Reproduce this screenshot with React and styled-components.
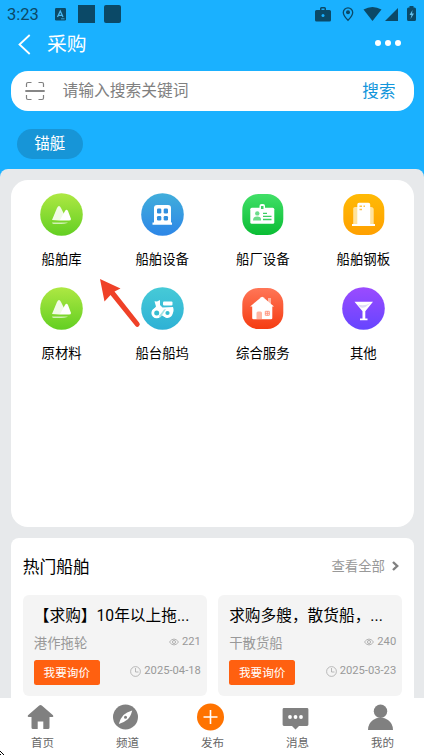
import React from 'react';
import styled, { createGlobalStyle } from 'styled-components';

const GlobalStyle = createGlobalStyle`
  * {
    box-sizing: border-box;
  }

  body {
    margin: 0;
    font-family: Roboto, 'Noto Sans CJK SC', sans-serif;
    overflow: hidden;
  }

  svg {
    display: block;
    flex-shrink: 0;
  }
`;

const Page = styled.div`
  position: relative;
  width: 424px;
  height: 755px;
  display: flex;
  flex-direction: column;
  overflow: hidden;
  background: #1ab1ff;
`;

const StatusBar = styled.div`
  height: 28px;
  padding: 2px 8px 0 7px;
  display: flex;
  align-items: center;
  color: #0b4967;
`;

const Time = styled.span`
  width: 48px;
  font-size: 16.5px;
  line-height: 26px;
`;

const StatusBlock = styled.span`
  width: 17px;
  height: 18px;
  margin: -2px 0 0 ${(props) => props.gap};
  border-radius: ${(props) => props.radius || 0};
  background: #0b4967;
`;

const StatusIcons = styled.svg`
  margin-left: auto;
`;

const NavBar = styled.div`
  height: 43px;
  padding: 0 23px 10px 18px;
  display: flex;
  align-items: center;
`;

const NavTitle = styled.h1`
  margin: 0 auto 0 16px;
  color: #fff;
  font-size: 19.8px;
  font-weight: 400;
  line-height: 32px;
`;

const Dots = styled.div`
  display: flex;
  gap: 4px;
  margin-top: -4px;

  span {
    width: 6px;
    height: 6px;
    border-radius: 50%;
    background: #fff;
  }
`;

const SearchBar = styled.div`
  height: 40px;
  margin: 0 10.5px 0 11.3px;
  padding: 0 18px 0 13.7px;
  display: flex;
  align-items: center;
  border-radius: 17px;
  background: #fff;
`;

const Placeholder = styled.span`
  margin: 0 auto 0 17.500px;
  color: #808080;
  font-size: 15.75px;
  line-height: 24px;
`;

const SearchAction = styled.span`
  margin-top: 2px;
  color: #1296db;
  font-size: 16.6px;
  line-height: 24px;
`;

const TagRow = styled.div`
  height: 58px;
  padding: 18px 17px 0;
`;

const Tag = styled.span`
  width: 65.5px;
  height: 30px;
  display: flex;
  justify-content: center;
  border-radius: 15px;
  background: #1795d7;
  color: #fff;
  font-size: 15.5px;
  line-height: 30px;
`;

const Content = styled.main`
  flex: 1;
  min-height: 0;
  padding: 11px 10.5px 0 11.3px;
  display: flex;
  flex-direction: column;
  gap: 11px;
  overflow: hidden;
  border-radius: 8px 8px 0 0;
  background: #e7e9eb;
`;

const CategoryCard = styled.section`
  height: 347px;
  flex-shrink: 0;
  display: grid;
  grid-template-columns: repeat(4, 100.6px);
  grid-auto-rows: 94px;
  padding-top: 13px;
  border-radius: 17px;
  background: #fff;
`;

const Category = styled.div`
  display: flex;
  flex-direction: column;
  align-items: center;
  gap: 14px;
  color: #000;
  font-size: 13.4px;
  line-height: 20px;
`;

const HotCard = styled.section`
  flex-shrink: 0;
  height: 180px;
  padding: 0 11.5px;
  border-radius: 8px;
  background: #fff;
`;

const HotHeader = styled.div`
  height: 57px;
  display: flex;
  justify-content: space-between;
  align-items: center;
`;

const HotTitle = styled.h2`
  margin: 0;
  color: #000;
  font-size: 16.75px;
  font-weight: 400;
  line-height: 24px;
`;

const More = styled.span`
  display: flex;
  align-items: center;
  gap: 7px;
  padding-right: 3px;
  color: #999;
  font-size: 13.4px;
  line-height: 24px;

  svg {
    margin-top: -2px;
  }
`;

const Ships = styled.div`
  display: grid;
  grid-template-columns: 184px 184px;
  gap: 11.4px;
`;

const Ship = styled.article`
  height: 101px;
  padding: 9px 6px 0 11px;
  border-radius: 6px;
  background: #f4f4f4;
`;

const ShipName = styled.div`
  width: 158px;
  overflow: hidden;
  white-space: nowrap;
  color: #000;
  font-size: 15.7px;
  line-height: 24px;
`;

const ShipRow = styled.div`
  display: flex;
  justify-content: space-between;
  margin-top: ${(props) => props.top};
`;

const ShipType = styled.span`
  color: #999;
  font-size: 13.4px;
  line-height: 20px;
`;

const Meta = styled.span`
  display: flex;
  align-items: center;
  gap: 3px;
  height: ${(props) => props.height};
  color: #999;
  font-size: ${(props) => props.size};
  line-height: 16px;
`;

const AskButton = styled.button`
  width: 66px;
  height: 25px;
  padding: 1px 0 0;
  border: 0;
  border-radius: 2.5px;
  background: #ff6010;
  color: #fff;
  font: 11.6px/24px Roboto, 'Noto Sans CJK SC', sans-serif;
`;

const TabBar = styled.nav`
  height: 57px;
  flex-shrink: 0;
  display: grid;
  grid-template-columns: repeat(5, 85px);
  padding-top: 5px;
  background: #fff;
`;

const Tab = styled.div`
  display: flex;
  flex-direction: column;
  align-items: center;
  gap: 3px;
  color: #666;
  font-size: 11.5px;
  line-height: 18px;

  svg {
    margin-left: -5px;
  }
`;

const Arrow = styled.svg`
  position: absolute;
  left: 98px;
  top: 277px;
`;

const Pointer = styled.svg`
  position: absolute;
  left: 0;
  bottom: 0;
`;

const Mountains = () => (
  <>
    <path d="M12 27 L17 15 Q19 11 21 15 L27 27Z" fill="#fff" opacity=".88" />
    <path d="M20 27 L25 18 Q26.5 15.5 28 18 L31 26 Q31 27.5 29 27.5 H12Z" fill="#fff" />
    <path d="M12 29.5 H28 Q25 31.5 13.5 31 Q12 30.5 12 29.5Z" fill="#fff" opacity=".65" />
  </>
);

const Building = () => (
  <>
    <path d="M13 29.5V15Q13 12 16 12H27Q30 12 30 15V29.5H31V31.7H11.5V29.5Z" fill="#fff" />
    <g fill="#318fdf">
      <rect x="16" y="15.5" width="4.3" height="5" rx="1.3" />
      <rect x="22.7" y="15.5" width="4.3" height="5" rx="1.3" />
      <rect x="16" y="23" width="4.3" height="4.6" rx="1.3" />
      <rect x="22.7" y="23" width="4.3" height="4.6" rx="1.3" />
    </g>
  </>
);

const Badge = () => (
  <>
    <rect x="9.3" y="14.7" width="24" height="16" rx="1.5" fill="#fff" />
    <rect x="18.5" y="11" width="5.5" height="6" rx="2" fill="#fff" />
    <rect x="20" y="13" width="2.5" height="3" fill="#3fcf65" />
    <circle cx="16.3" cy="20.4" r="2.2" fill="#6bdc89" />
    <path d="M12 27.5Q12 23.5 16.2 23.5T20 27.5Z" fill="#6bdc89" />
    <path d="M22 20.3H26M22 23.3H30.5M22 26.5H30.5" stroke="#3bcf63" strokeWidth="1.3" />
  </>
);

const Tower = () => (
  <>
    <path d="M11.2 31V15.5Q11.2 14 13 14H16V31M27 14H29Q31.7 14 31.7 16.5V31H27Z" fill="#ffe39d" />
    <path d="M15.3 31V11.5Q15.3 9.7 17 9.7H26.5Q28.2 9.7 28.2 11.5V31H33V33H10V31Z" fill="#fff" />
    <path d="M17.5 13.3H20M17.5 16.5H20M21.5 13.3H23" stroke="#ffc347" strokeWidth="1.5" />
  </>
);

const Tractor = () => (
  <>
    <path d="M13.5 14.3L16 14.5L19 13V18L21.5 20.5L32 20Q33.5 24 31 27.5L26 31L18 27L11 24L15 19.5Z" fill="#fff" />
    <rect x="22" y="14.5" width="9.5" height="4" rx="1" fill="#fff" />
    <circle cx="15.7" cy="26" r="3.9" fill="#36bdd0" stroke="#fff" strokeWidth="2.8" />
    <circle cx="26.5" cy="26" r="3.6" fill="#36bdd0" stroke="#fff" strokeWidth="3" />
    <path d="M18 29L23 22.5L25 22L19.5 30.5Z" fill="#a3e3e5" />
  </>
);

const House = () => (
  <>
    <path d="M27 11H30V20H27Z" fill="#ffb6a4" />
    <path d="M20.2 10.2Q21.2 9.4 22.2 10.2L33 19.5H9.2Z" fill="#fff" />
    <path d="M11.2 19H31.3V31Q31.3 32.3 30 32.3H12.5Q11.2 32.3 11.2 31Z" fill="#fff" />
    <path d="M15.5 32V26Q15.5 24.5 17 24.5H19.5Q21 24.5 21 26V32Z" fill="#ffb4a0" />
    <path d="M24.3 24.3H28.3V28.3H24.3ZM26.3 24V28.5M24 26.3H28.5" fill="none" stroke="#ff937a" strokeWidth=".9" />
  </>
);

const Cocktail = () => (
  <>
    <path d="M12.5 14.8H31L23.3 24.3V31.5H25.5V33.3H18V31.5H20.5V24.3Z" fill="#fff" />
    <path d="M16 17.5Q22 19.5 28.5 16L23.5 20Q20 21.5 18 20Z" fill="#dfdbf6" />
  </>
);

const categories = [
  { id: 'library', label: '船舶库', from: '#aee843', to: '#63cf22', Glyph: Mountains },
  { id: 'gear', label: '船舶设备', from: '#41aedb', to: '#2d86e7', Glyph: Building },
  { id: 'yard', label: '船厂设备', from: '#41df67', to: '#0abd34', square: true, Glyph: Badge },
  { id: 'steel', label: '船舶钢板', from: '#ffba05', to: '#ffa000', square: true, Glyph: Tower },
  { id: 'material', label: '原材料', from: '#aee843', to: '#63cf22', Glyph: Mountains },
  { id: 'dock', label: '船台船坞', from: '#46cad7', to: '#2eb1d5', Glyph: Tractor },
  { id: 'service', label: '综合服务', from: '#ff7657', to: '#f53c12', square: true, Glyph: House },
  { id: 'other', label: '其他', from: '#9b4bff', to: '#6645ff', Glyph: Cocktail },
];

const ships = [
  { name: '【求购】10年以上拖...', type: '港作拖轮', views: 221, date: '2025-04-18' },
  { name: '求购多艘，散货船，...', type: '干散货船', views: 240, date: '2025-03-23' },
];

const tabs = [
  {
    label: '首页',
    icon: (
      <path
        d="M12.2 2.5Q13.5 1.400 14.800 2.5L26 12.200Q27 13.700 25.5 14H22.5V24.5Q22.5 26 21 26H16.3V18.5H10.7V26H6Q4.5 26 4.5 24.5V14H1.5Q0 13.5 1 12.2Z"
        fill="#808080"
      />
    ),
  },
  {
    label: '频道',
    icon: (
      <>
        <circle cx="13.5" cy="14" r="12.5" fill="#808080" />
        <path d="M20.2 7.5Q18.5 14 15.5 16.5Q12 19.5 6.8 21Q8.5 15 11.5 12Q14.5 9 20.2 7.5Z" fill="#fff" />
        <circle cx="13.5" cy="14.2" r="1.5" fill="#808080" />
      </>
    ),
  },
  {
    label: '发布',
    icon: (
      <>
        <circle cx="13.5" cy="14" r="13.5" fill="#ff7300" />
        <path d="M13.5 7V21M6.5 14H20.5" stroke="#fff" strokeWidth="1.6" />
      </>
    ),
  },
  {
    label: '消息',
    icon: (
      <>
        <path d="M2 5H25Q26.4 5 26.4 6.400V21.6Q26.4 23 25 23H17L13.5 26.5L10 23H2Q.6 23 .6 21.6V6.400Q.6 5 2 5Z" fill="#808080" />
        <g fill="#fff">
          <circle cx="8" cy="14" r="1.9" />
          <circle cx="13.5" cy="14" r="1.9" />
          <circle cx="19" cy="14" r="1.9" />
        </g>
      </>
    ),
  },
  {
    label: '我的',
    icon: (
      <>
        <circle cx="13.5" cy="8.2" r="6.700" fill="#808080" />
        <path d="M1 27Q1 20.5 6 17Q9 14.5 13.5 14.5Q18 14.5 21 17Q26 20.5 26 27Z" fill="#808080" />
      </>
    ),
  },
];

const CategoryIcon = ({ id, from, to, square, Glyph }) => (
  <svg width="43" height="43" viewBox="0 0 43 43">
    <defs>
      <linearGradient id={id} x1="0" y1="0" x2="0" y2="1">
        <stop offset="0" stopColor={from} />
        <stop offset="1" stopColor={to} />
      </linearGradient>
    </defs>
    {square ? (
      <rect x="1.3" y="1" width="41" height="41" rx="16" fill={`url(#${id})`} />
    ) : (
      <circle cx="21.5" cy="21.5" r="21.3" fill={`url(#${id})`} />
    )}
    <Glyph />
  </svg>
);

const App = () => {
  return (
    <Page>
      <GlobalStyle />
      <StatusBar>
        <Time>3:23</Time>
        <svg width="11" height="15" viewBox="0 0 11 15">
          <rect width="11" height="12.5" rx="1.2" fill="#0b4967" />
          <path d="M2.5 9L5.3 3L8 9M3.5 7.3H7" fill="none" stroke="#49b7ef" strokeWidth="1.3" />
          <path d="M6 10.8H9.5" stroke="#49b7ef" strokeWidth=".8" />
        </svg>
        <StatusBlock gap="12px" />
        <StatusBlock gap="9px" radius="2px" />
        <StatusIcons width="102" height="18" viewBox="0 0 102 18" fill="#0b4967">
          <path
            d="M6 3V2.5Q6 1 7.5 1H10.5Q12 1 12 2.5V4H15.5Q17 4 17 5.5V14Q17 15.5 15.5 15.5H2.5Q1 15.5 1 14V5.5Q1 4 2.5 4H6ZM7.5 4H10.5V2.5H7.5Z"
            fillRule="evenodd"
          />
          <circle cx="9" cy="9.5" r="1.5" fill="#1ab1ff" />
          <path d="M34 1.8A4.7 4.7 0 0 0 29.3 6.5C29.3 9.5 34 14.3 34 14.3S38.7 9.5 38.7 6.5A4.7 4.7 0 0 0 34 1.8Z" fill="none" stroke="#0b4967" strokeWidth="1.3" />
          <circle cx="34" cy="6.3" r="2" />
          <path d="M49.5 3.5Q58.5-1.5 67.5 3.5L58.5 15Z" />
          <path d="M71 15L84 2V15Z" />
          <path d="M93 3Q93 1.5 94.5 1.5H95.5V0H99.5V1.5H100.5Q102 1.5 102 3V13.5Q102 15 100.5 15H94.5Q93 15 93 13.5Z" />
          <path d="M98.5 4L95.5 9H97.5L96.5 13L100 7.5H98Z" fill="#64c2ed" />
        </StatusIcons>
      </StatusBar>

      <NavBar>
        <svg width="13" height="21" viewBox="0 0 13 21">
          <path d="M11.7 1L1.5 10.5L11.7 20" fill="none" stroke="#fff" strokeWidth="1.8" />
        </svg>
        <NavTitle>采购</NavTitle>
        <Dots>
          <span />
          <span />
          <span />
        </Dots>
      </NavBar>

      <SearchBar>
        <svg width="20" height="20" viewBox="0 0 20 20" fill="none" stroke="#808080">
          <path
            d="M1.5 6V3Q1.5 1.5 3 1.5H6.5M13.5 1.5H17Q18.5 1.5 18.5 3V6M18.5 14V17Q18.5 18.5 17 18.5H13.5M6.5 18.5H3Q1.5 18.5 1.5 17V14"
            strokeWidth="1.2"
          />
          <path d="M.3 10H19.7" strokeWidth="1.9" />
        </svg>
        <Placeholder>请输入搜索关键词</Placeholder>
        <SearchAction>搜索</SearchAction>
      </SearchBar>

      <TagRow>
        <Tag>锚艇</Tag>
      </TagRow>

      <Content>
        <CategoryCard>
          {categories.map((item) => (
            <Category key={item.id}>
              <CategoryIcon {...item} />
              {item.label}
            </Category>
          ))}
        </CategoryCard>

        <HotCard>
          <HotHeader>
            <HotTitle>热门船舶</HotTitle>
            <More>
              查看全部
              <svg width="7" height="10" viewBox="0 0 7 10">
                <path d="M1 1L5.2 5L1 9" fill="none" stroke="#808080" strokeWidth="2.4" />
              </svg>
            </More>
          </HotHeader>
          <Ships>
            {ships.map((ship) => (
              <Ship key={ship.date}>
                <ShipName>{ship.name}</ShipName>
                <ShipRow top="6px">
                  <ShipType>{ship.type}</ShipType>
                  <Meta size="11.2px" height="15px">
                    <svg width="10" height="8" viewBox="0 0 11 8" fill="none" stroke="#999" strokeWidth=".8">
                      <path d="M.5 4Q5.5-2.5 10.5 4Q5.5 10.5 .5 4Z" />
                      <circle cx="5.5" cy="4" r="1.7" />
                    </svg>
                    {ship.views}
                  </Meta>
                </ShipRow>
                <ShipRow top="6px">
                  <AskButton>我要询价</AskButton>
                  <Meta size="11.2px" height="22px">
                    <svg width="11" height="11" viewBox="0 0 11 11" fill="none" stroke="#aaa" strokeWidth=".8">
                      <circle cx="5.5" cy="5.5" r="4.9" />
                      <path d="M5.5 2V6H8.5" />
                    </svg>
                    {ship.date}
                  </Meta>
                </ShipRow>
              </Ship>
            ))}
          </Ships>
        </HotCard>
      </Content>

      <TabBar>
        {tabs.map((tab) => (
          <Tab key={tab.label}>
            <svg width="27" height="28" viewBox="0 0 27 28">
              {tab.icon}
            </svg>
            {tab.label}
          </Tab>
        ))}
      </TabBar>

      <Arrow width="43" height="52" viewBox="0 0 43 52">
        <path d="M2 2L22.5 11.5L16.5 14.5L41 45.5A2.3 2.3 0 0 1 37.5 49L12.5 18L6.5 24.5Z" fill="#ef4128" />
      </Arrow>
      <Pointer width="5" height="5" viewBox="0 0 5 5">
        <path d="M0 1.5H1M1 2.5H2M2 3.5H3M3 4.5H4M0 4.5H1" stroke="#000" />
      </Pointer>
    </Page>
  );
};

export default App;
